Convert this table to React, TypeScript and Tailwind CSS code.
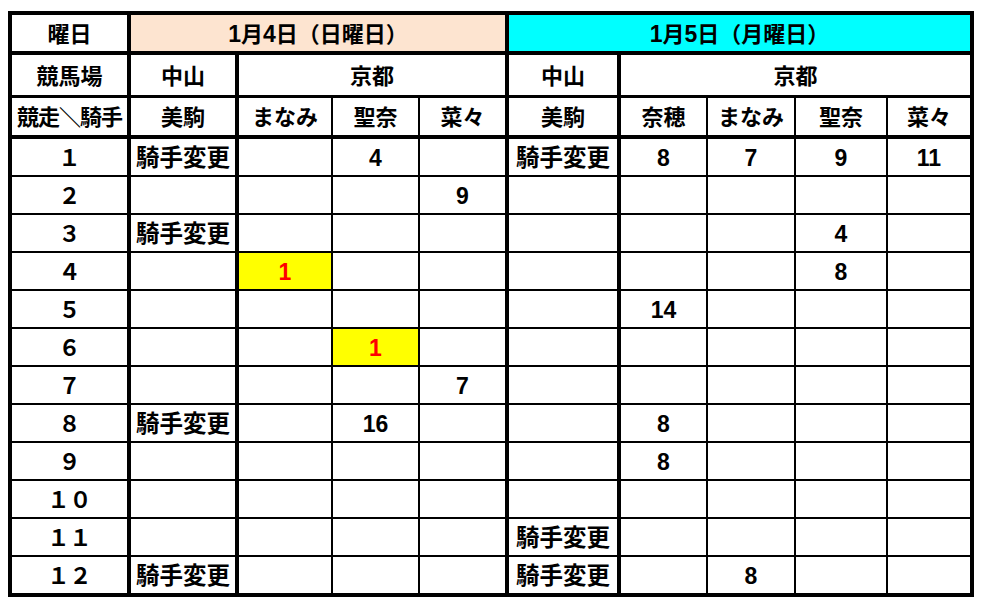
const font = { fontFamily: "'Liberation Sans', 'Noto Sans CJK JP', sans-serif" }

// right border width of each column (Excel-style thick/thin lines)
const thick = [true, true, false, false, true, true, false, false, false, true]

type Val = string | { v: string; hl: true }

const rows: Val[][] = [
  ["１", "騎手変更", "", "4", "", "騎手変更", "8", "7", "9", "11"],
  ["２", "", "", "", "9", "", "", "", "", ""],
  ["３", "騎手変更", "", "", "", "", "", "", "4", ""],
  ["４", "", { v: "1", hl: true }, "", "", "", "", "", "8", ""],
  ["５", "", "", "", "", "", "14", "", "", ""],
  ["６", "", "", { v: "1", hl: true }, "", "", "", "", "", ""],
  ["７", "", "", "", "7", "", "", "", "", ""],
  ["８", "騎手変更", "", "16", "", "", "8", "", "", ""],
  ["９", "", "", "", "", "", "8", "", "", ""],
  ["１０", "", "", "", "", "", "", "", "", ""],
  ["１１", "", "", "", "", "騎手変更", "", "", "", ""],
  ["１２", "騎手変更", "", "", "", "騎手変更", "", "8", "", ""],
]

function Cell({
  children,
  thickRight,
  bottom,
  className = "",
}: {
  children?: React.ReactNode
  thickRight: boolean
  bottom: "thin" | "mid" | "thick"
  className?: string
}) {
  const r = thickRight ? "border-r-4" : "border-r-2"
  const b = bottom === "thick" ? "border-b-4" : bottom === "mid" ? "border-b-[3px]" : "border-b-2"
  return (
    <div className={`flex items-center justify-center whitespace-nowrap border-black pt-[3px] ${r} ${b} ${className}`}>
      {children}
    </div>
  )
}

export default function App() {
  return (
    <main className="min-h-screen bg-white pl-[8px] pt-[11px] text-black" style={font}>
      <div className="grid w-fit grid-cols-[119px_108px_94px_87px_89px_112px_87px_88px_92px_86px] grid-rows-[40px_43px_41px_repeat(11,38px)_40px] border-l-4 border-t-4 border-black text-[22px] font-bold leading-none">
        {/* row 1 */}
        <Cell thickRight bottom="thick">曜日</Cell>
        <Cell thickRight bottom="thick" className="col-span-4 bg-[#fde4d0]">
          <span className="text-[23px]">1</span>月<span className="text-[23px]">4</span>日（日曜日）
        </Cell>
        <Cell thickRight bottom="thick" className="col-span-5 bg-[#00ffff]">
          <span className="text-[23px]">1</span>月<span className="text-[23px]">5</span>日（月曜日）
        </Cell>

        {/* row 2 */}
        <Cell thickRight bottom="mid">競馬場</Cell>
        <Cell thickRight bottom="mid">中山</Cell>
        <Cell thickRight bottom="mid" className="col-span-3">京都</Cell>
        <Cell thickRight bottom="mid">中山</Cell>
        <Cell thickRight bottom="mid" className="col-span-4">京都</Cell>

        {/* row 3 */}
        {["競走＼騎手", "美駒", "まなみ", "聖奈", "菜々", "美駒", "奈穂", "まなみ", "聖奈", "菜々"].map((t, i) => (
          <Cell key={i} thickRight={thick[i]} bottom="thick" className={i === 0 ? "tracking-[-1px]" : ""}>
            {t}
          </Cell>
        ))}

        {/* body */}
        {rows.map((row, ri) =>
          row.map((val, ci) => {
            const last = ri === rows.length - 1
            if (typeof val === "object") {
              return (
                <Cell key={`${ri}-${ci}`} thickRight={thick[ci]} bottom={last ? "thick" : "thin"} className="bg-[#ffff00] text-[23px] text-[#ff0000]">
                  {val.v}
                </Cell>
              )
            }
            let size = ""
            if (val === "騎手変更") size = "text-[23.5px]"
            else if (ci > 0 && val !== "") size = "text-[23px]"
            return (
              <Cell key={`${ri}-${ci}`} thickRight={thick[ci]} bottom={last ? "thick" : "thin"} className={size}>
                {val}
              </Cell>
            )
          })
        )}
      </div>
    </main>
  )
}
